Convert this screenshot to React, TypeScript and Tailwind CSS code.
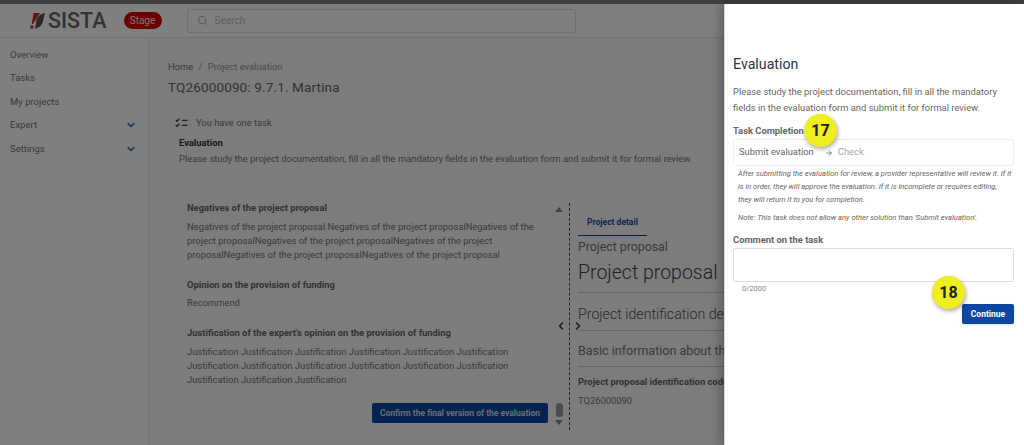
import { ChevronDown, ChevronLeft, ChevronRight, ArrowRight, Search } from "lucide-react";

const navItems = [
  { label: "Overview" },
  { label: "Tasks" },
  { label: "My projects" },
  { label: "Expert", expandable: true },
  { label: "Settings", expandable: true },
];

const Logo = () => (
  <div className="flex items-center gap-[3px]">
    <svg width="15" height="16" viewBox="0 0 15 16">
      <path d="M3.5 0H10L3 11H1.8z" fill="#d42027" />
      <path d="M.6 12.5h3l-.5 3H0z" fill="#d42027" />
      <path d="M15 0C15 0 8 1 6.5 7L5 15.7C10 15 12.5 11 13 8z" fill="#555" />
    </svg>
    <span className="text-[21.5px] leading-none font-medium text-[#666]">SISTA</span>
  </div>
);

const Field = ({ title, lines, gap = "mt-[5px]" }: { title: string; lines: string[]; gap?: string }) => (
  <div>
    <div className="text-[9.4px] leading-[14px] font-bold text-[#666]">{title}</div>
    <div className={`${gap} text-[9.4px] leading-[14px] text-[#777]`}>
      {lines.map((line, index) => (
        <div key={index} className="whitespace-nowrap">{line}</div>
      ))}
    </div>
  </div>
);

const Marker = ({ value, className }: { value: number; className: string }) => (
  <div
    className={`absolute flex h-[33px] w-[33px] items-center justify-center rounded-full bg-[#eeee22] text-[16px] font-bold text-[#222] shadow-[1px_2px_4px_rgba(0,0,0,0.35)] ${className}`}
  >
    {value}
  </div>
);

export default function App() {
  return (
    <div className="relative flex h-[445px] w-[1024px] flex-col overflow-hidden bg-white font-['Roboto',sans-serif]">
      <div className="h-1 shrink-0 bg-[#7e7e7e]" />

      <header className="flex h-[34px] shrink-0 items-center border-b border-[#e4e4e4] pl-[30px]">
        <Logo />
        <span className="ml-[17px] flex h-[17px] w-[38px] items-center justify-center rounded-full bg-[#d40000] text-[10px] text-[#eee]">
          Stage
        </span>
        <div className="ml-[25px] flex h-[24px] w-[389px] items-center rounded-[2px] border border-[#dcdcdc] pl-[9px]">
          <Search className="h-[11px] w-[11px] text-[#aaa]" strokeWidth={2} />
          <span className="ml-[7px] text-[10px] text-[#bbb]">Search</span>
        </div>
      </header>

      <div className="flex min-h-0 flex-1">
        <aside className="w-[149px] shrink-0 border-r border-[#e4e4e4] pt-[5px] pr-[11px] pl-[10px]">
          {navItems.map((item) => (
            <div key={item.label} className="flex h-[23.5px] items-center justify-between text-[9.5px] text-[#777]">
              <span>{item.label}</span>
              {item.expandable && <ChevronDown className="h-3 w-3 text-[#1a5fb4]" strokeWidth={2.5} />}
            </div>
          ))}
        </aside>

        <main className="min-w-0 flex-1 bg-[#f8f8f8] pt-[22px] pl-[19px]">
          <div className="text-[9.4px] leading-[14px] text-[#777]">
            Home <span className="mx-[3px] text-[#999]">/</span> <span className="text-[#999]">Project evaluation</span>
          </div>
          <h1 className="mt-[2px] text-[13.5px] leading-[22px] tracking-[0.15px] text-[#666]">TQ26000090: 9.7.1. Martina</h1>

          <section className="mt-[18px] pl-[7px]">
            <div className="flex items-center text-[9.4px] leading-[14px] text-[#777]">
              <svg width="13" height="10" viewBox="0 0 13 10" fill="none" stroke="#444" strokeWidth="1.3">
                <path d="M.8 2l1.3 1.2L4.4.6M.8 7.2l1.3 1.2 2.3-2.6M7 2.4h5.5M7 7.4h5.5" />
              </svg>
              <span className="ml-[8px]">You have one task</span>
            </div>
            <div className="mt-[6px] pl-[4px]">
              <div className="text-[9.4px] leading-[14px] font-bold text-[#333]">Evaluation</div>
              <p className="mt-[2px] text-[9.4px] leading-[14px] whitespace-nowrap text-[#777]">
                Please study the project documentation, fill in all the mandatory fields in the evaluation form and submit it for formal review.
              </p>
            </div>
          </section>

          <div className="mt-[35px] flex h-[229px] overflow-hidden pl-[19px]">
            <div className="flex w-[362px] shrink-0 flex-col">
              <div className="flex flex-col gap-[16px]">
                <Field
                  title="Negatives of the project proposal"
                  lines={[
                    "Negatives of the project proposal Negatives of the project proposalNegatives of the",
                    "project proposalNegatives of the project proposalNegatives of the project",
                    "proposalNegatives of the project proposalNegatives of the project proposal",
                  ]}
                />
                <Field title="Opinion on the provision of funding" lines={["Recommend"]} gap="mt-[4px]" />
                <Field
                  title="Justification of the expert's opinion on the provision of funding"
                  lines={[
                    "Justification Justification Justification Justification Justification Justification",
                    "Justification Justification Justification Justification Justification Justification",
                    "Justification Justification Justification",
                  ]}
                />
              </div>
              <button className="mt-auto mb-[7px] ml-[185px] h-[20px] w-[176px] shrink-0 rounded-[2px] bg-[#0b47a1] text-[8.5px] font-bold whitespace-nowrap text-[#cfd8e8]">
                Confirm the final version of the evaluation
              </button>
            </div>

            <div className="flex w-[20px] shrink-0 flex-col items-center pt-[6px] pb-[5px]">
              <div className="h-0 w-0 border-x-[4px] border-b-[5px] border-x-transparent border-b-[#888]" />
              <ChevronLeft className="mt-[108px] ml-[4px] h-3 w-3 text-[#333]" strokeWidth={3} />
              <div className="mt-auto flex flex-col items-center gap-[3px]">
                <div className="h-[14px] w-[7px] rounded-full bg-[#999]" />
                <div className="h-0 w-0 border-x-[4px] border-t-[5px] border-x-transparent border-t-[#888]" />
              </div>
            </div>

            <div className="relative mt-[2px] min-w-0 flex-1 border-l border-dashed border-[#444] pl-[8px]">
              <ChevronRight className="absolute top-[117px] left-[2px] h-3 w-3 text-[#333]" strokeWidth={3} />
              <div className="w-[69px] border-b border-[#0b47a1] pt-[12px] pb-[6px] text-center text-[8.5px] leading-[14px] font-bold text-[#1a4fa0]">
                Project detail
              </div>
              <div className="mt-[1px] text-[12.3px] leading-[20px] whitespace-nowrap text-[#777]">Project proposal</div>
              <div className="mt-[3px] border-b border-[#ccc] pb-[6px] text-[19.5px] leading-[26px] font-light whitespace-nowrap text-[#444]">
                Project proposal
              </div>
              <div className="border-b border-[#ccc] pt-[13px] pb-[8px] text-[14.2px] leading-[16px] font-light whitespace-nowrap text-[#555]">
                Project identification details
              </div>
              <div className="border-b border-[#ccc] pt-[13px] pb-[8px] text-[12.5px] leading-[14px] whitespace-nowrap text-[#777]">
                Basic information about the project
              </div>
              <div className="mt-[8px] text-[9.4px] leading-[14px] font-bold whitespace-nowrap text-[#666]">
                Project proposal identification code
              </div>
              <div className="mt-[5px] text-[9.4px] leading-[14px] text-[#777]">TQ26000090</div>
              <div className="mt-[19px] text-[9.4px] leading-[14px] font-bold whitespace-nowrap text-[#666]">Project proposal title</div>
            </div>
          </div>
        </main>
      </div>

      <div className="absolute inset-0 bg-black/50" />

      <aside className="absolute top-1 right-0 bottom-0 w-[300px] border-l border-[#d8d8d8] bg-white pt-[51px] pl-[8px] shadow-[-4px_0_10px_rgba(0,0,0,0.25)]">
        <h2 className="text-[14.2px] leading-[18px] text-[#333]">Evaluation</h2>
        <p className="mt-[11px] w-[285px] text-[9.4px] leading-[16px] text-[#666]">
          Please study the project documentation, fill in all the mandatory fields in the evaluation form and submit it for formal review.
        </p>
        <div className="mt-[8px] text-[9.4px] leading-[14px] font-bold text-[#666]">Task Completion</div>
        <div className="mt-[1px] flex h-[27px] w-[281px] items-center rounded-[2px] border border-[#eeeeee] pl-[5px] text-[9.4px]">
          <span className="text-[#666]">Submit evaluation</span>
          <ArrowRight className="mr-[5px] ml-[11px] h-[8px] w-[8px] text-[#555]" />
          <span className="text-[#aaa]">Check</span>
        </div>
        <div className="mt-[1px] w-[281px] pl-[5px] text-[7.55px] leading-[13px] text-[#666] italic">
          <p>
            After submitting the evaluation for review, a provider representative will review it. If it<br />
            is in order, they will approve the evaluation. If it is incomplete or requires editing,<br />
            they will return it to you for completion.
          </p>
          <p className="mt-[5px]">Note: This task does not allow any other solution than 'Submit evaluation'.</p>
        </div>
        <div className="mt-[9px] text-[9.4px] leading-[14px] font-bold text-[#666]">Comment on the task</div>
        <div className="mt-[1px] h-[34px] w-[281px] rounded-[2px] border border-[#dddddd]" />
        <div className="mt-[1px] pl-[9px] text-[7.5px] leading-[12px] text-[#888]">0/2000</div>
        <div className="mt-[9px] flex w-[281px] justify-end">
          <button className="h-[20px] w-[52px] rounded-[2px] bg-[#0b47a1] text-[8.5px] font-bold text-white shadow-sm">Continue</button>
        </div>
      </aside>

      <Marker value={17} className="top-[114px] left-[804px]" />
      <Marker value={18} className="top-[276px] left-[932px]" />
    </div>
  );
}
